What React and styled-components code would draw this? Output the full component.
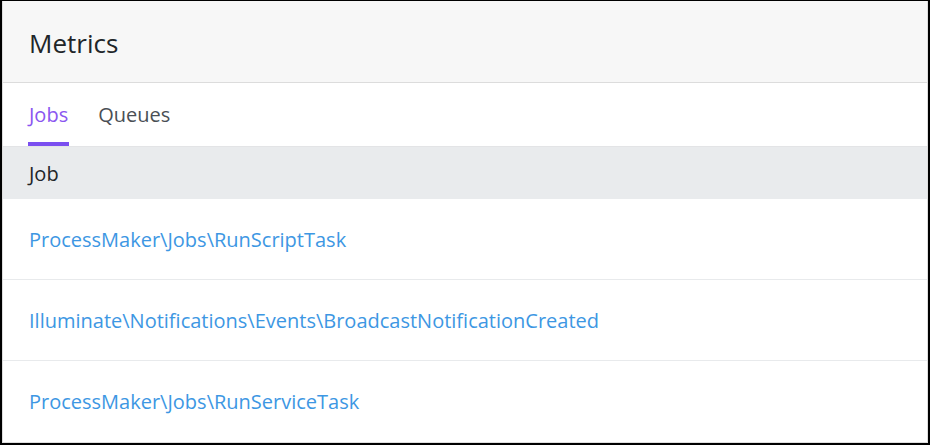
import React from 'react'
import styled, { createGlobalStyle } from 'styled-components'

const GlobalStyle = createGlobalStyle`
  html, body {
    margin: 0;
    padding: 0;
    background: #fff;
  }
  body {
    font-family: 'Open Sans', 'Noto Sans', sans-serif;
  }
`

const jobs = [
  'ProcessMaker\\Jobs\\RunScriptTask',
  'Illuminate\\Notifications\\Events\\BroadcastNotificationCreated',
  'ProcessMaker\\Jobs\\RunServiceTask',
]

const App = () => (
  <>
    <GlobalStyle />
    <Frame>
      <Card>
        <Header>Metrics</Header>
        <Tabs>
          <Tab active>Jobs</Tab>
          <Tab>Queues</Tab>
        </Tabs>
        <Table>
          <HeadRow>Job</HeadRow>
          {jobs.map((job) => (
            <Row key={job}>
              <JobLink href='#'>{job}</JobLink>
            </Row>
          ))}
        </Table>
      </Card>
    </Frame>
  </>
)

export default App

const Frame = styled.div`
  box-sizing: border-box;
  width: 930px;
  height: 445px;
  border-style: solid;
  border-color: #000;
  border-width: 1px 2px 2px 2px;
  overflow: hidden;
`

const Card = styled.div`
  box-sizing: border-box;
  height: 100%;
  border: 1px solid #dedede;
  border-top: none;
  display: flex;
  flex-direction: column;
  background: #fff;
`

const Header = styled.div`
  box-sizing: border-box;
  height: 84px;
  padding: 2px 26px 0;
  display: flex;
  align-items: center;
  background: #f7f7f7;
  border-bottom: 1px solid #dcdcdc;
  color: #212529;
  font-size: 26px;
`

const Tabs = styled.div`
  display: flex;
  gap: 28px;
  padding: 0 25px;
  height: 64px;
  border-bottom: 1px solid #e3e4e6;
`

const Tab = styled.div`
  box-sizing: border-box;
  display: flex;
  align-items: center;
  padding: 4px 1px 0;
  font-size: 20px;
  color: ${(p) => (p.active ? '#8a56f0' : '#4a4f55')};
  border-bottom: 4px solid ${(p) => (p.active ? '#7b4ff0' : 'transparent')};
`

const Table = styled.div`
  display: flex;
  flex-direction: column;
`

const HeadRow = styled.div`
  box-sizing: border-box;
  height: 52px;
  padding: 0 26px;
  display: flex;
  align-items: center;
  background: #e9ebed;
  color: #212529;
  font-size: 20px;
`

const Row = styled.div`
  box-sizing: border-box;
  height: 81px;
  padding: 0 26px;
  display: flex;
  align-items: center;
  border-bottom: 1px solid #e8eaec;
  &:last-child {
    border-bottom: none;
  }
`

const JobLink = styled.a`
  color: #3d97e3;
  font-size: 20px;
  text-decoration: none;
`
